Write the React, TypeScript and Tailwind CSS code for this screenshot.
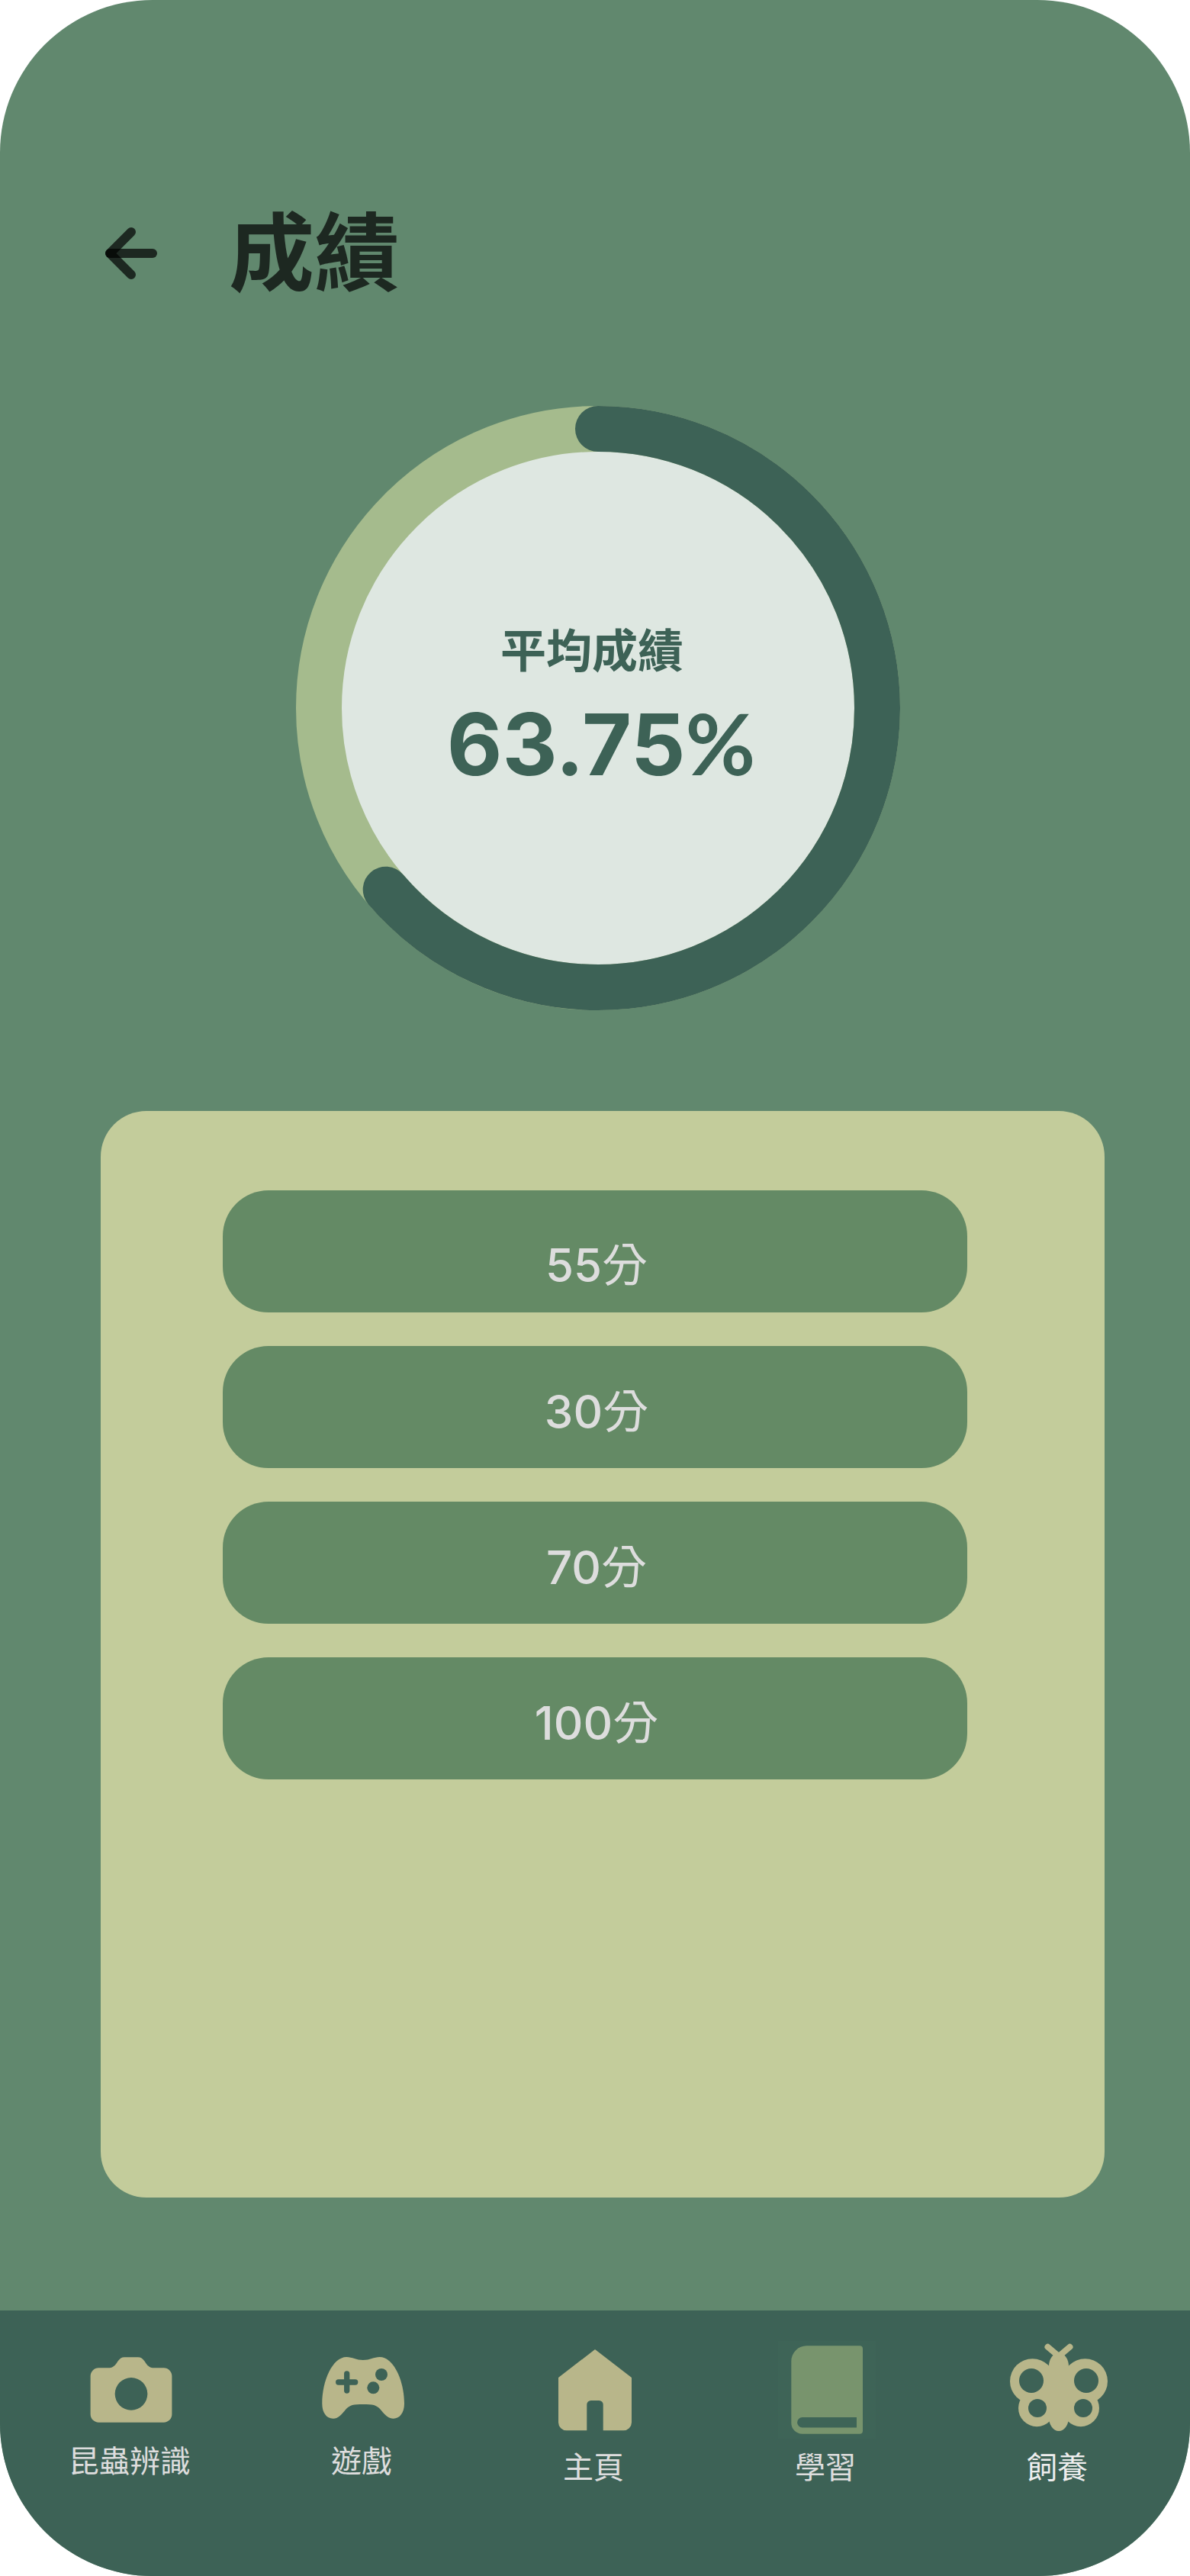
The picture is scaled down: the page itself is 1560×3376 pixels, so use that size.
import type { ReactNode } from 'react';

const FONT = "font-['Inter','Noto_Sans_CJK_TC',sans-serif]";

const AVERAGE = 63.75;

const scores = [
  { value: 55, row: 'pt-9' },
  { value: 30, row: 'pt-3' },
  { value: 70, row: 'pt-3' },
  { value: 100, row: 'pt-3' },
];

function BackIcon() {
  return (
    <svg viewBox="0 0 72 72" className="size-18" fill="none" stroke="#000" strokeWidth="12" strokeLinecap="round" strokeLinejoin="round" aria-hidden="true">
      <path d="M8 36H64" strokeOpacity="0.7" />
      <path d="M36 8L8 36L36 64" strokeOpacity="0.7" />
    </svg>
  );
}

function ProgressRing({ percent }: { percent: number }) {
  return (
    <svg viewBox="0 0 792 792" className="col-start-1 row-start-1 w-full" fill="none" aria-hidden="true">
      <circle cx="396" cy="396" r="366" fill="#DEE7E1" stroke="#A5BB8D" strokeWidth="60" />
      <circle
        cx="396"
        cy="396"
        r="366"
        stroke="#3D6256"
        strokeWidth="60"
        strokeLinecap="round"
        pathLength="100"
        strokeDasharray={`${percent} 100`}
        transform="rotate(-90 396 396)"
      />
    </svg>
  );
}

function Icon({ children }: { children: ReactNode }) {
  return (
    <svg viewBox="0 0 128 128" className="size-32" fill="#B8B68A" aria-hidden="true">
      {children}
    </svg>
  );
}

const cameraIcon = (
  <Icon>
    <path
      fillRule="evenodd"
      d="M21.3 35.3H34C39 35.3 42 33 44.5 29.5L46.5 26.5C49 23 51.5 21.3 55 21.3H73C76.5 21.3 79 23 81.5 26.5L83.5 29.5C86 33 89 35.3 94 35.3H106.7A10.7 10.7 0 0 1 117.4 46V96A10.7 10.7 0 0 1 106.7 106.7H21.3A10.7 10.7 0 0 1 10.6 96V46A10.7 10.7 0 0 1 21.3 35.3ZM64 48A21.3 21.3 0 1 0 64 90.7A21.3 21.3 0 1 0 64 48Z"
    />
  </Icon>
);

const gamepadIcon = (
  <Icon>
    <path d="M42.3 21C50 21 55 25 64 25C73 25 78 21 85.7 21C104 21 118 52 118 82C118 94 112 101.7 103.7 101.7C96 101.7 92 96 87 90C81 83.5 77 83 64 83C51 83 47 83.5 41 90C36 96 32 101.7 24.7 101.7C16 101.7 10.3 94 10.3 82C10.3 52 24 21 42.3 21Z" />
    <path d="M42.7 43V65M31.7 54H53.7" stroke="#3D6256" strokeWidth="7.3" strokeLinecap="round" />
    <circle cx="88" cy="44" r="8" fill="#3D6256" />
    <circle cx="77.3" cy="61.3" r="8" fill="#3D6256" />
  </Icon>
);

const homeIcon = (
  <Icon>
    <path d="M64 11L112 48V106.7A10.7 10.7 0 0 1 101.3 117.3H74.7V83.3A5.3 5.3 0 0 0 69.3 78H58.7A5.3 5.3 0 0 0 53.3 83.3V117.3H26.7A10.7 10.7 0 0 1 16 106.7V48Z" />
  </Icon>
);

const bookIcon = (
  <Icon>
    <rect width="128" height="128" fill="#3E6457" />
    <path
      fill="#78946D"
      fillRule="evenodd"
      d="M37.5 6.3H107A4 4 0 0 1 111 10.3V117.7A4 4 0 0 1 107 121.7H31.5A14.2 14.2 0 0 1 17.3 107.5V26.5A20.2 20.2 0 0 1 37.5 6.3ZM31.9 100A6.8 6.8 0 0 0 31.9 113.6H103V100Z"
    />
  </Icon>
);

const butterflyIcon = (
  <Icon>
    <path d="M49.5 7.8L64 20L78.5 7.8" fill="none" stroke="#B8B68A" strokeWidth="8" strokeLinecap="round" />
    <circle cx="29.5" cy="52.7" r="29.5" />
    <circle cx="98.5" cy="52.7" r="29.5" />
    <circle cx="35.2" cy="88" r="24.2" />
    <circle cx="92.8" cy="88" r="24.2" />
    <rect x="42" y="40" width="44" height="60" />
    <rect x="51" y="15.5" width="26" height="102.5" rx="13" ry="18" />
    <g fill="#3D6256">
      <circle cx="28" cy="52" r="16" />
      <circle cx="100" cy="52" r="16" />
      <circle cx="36" cy="88" r="12" />
      <circle cx="96" cy="88" r="12" />
    </g>
  </Icon>
);

const tabs = [
  { label: '昆蟲辨識', icon: cameraIcon, text: 'mt-1 text-[#DDDDDD]' },
  { label: '遊戲', icon: gamepadIcon, text: 'mt-1 text-[#DDDDDD]' },
  { label: '主頁', icon: homeIcon, text: 'mt-3 text-[#DDDDDD]' },
  { label: '學習', icon: bookIcon, text: 'mt-3 text-[#DDDDDD]', current: true },
  { label: '飼養', icon: butterflyIcon, text: 'mt-3 text-[#EEEEEE]' },
];

export default function App() {
  return (
    <div className={`flex min-h-screen flex-col overflow-hidden rounded-[200px] bg-[#61886E] ${FONT}`}>
      <header className="flex items-center gap-[92px] pt-[252px] pl-[136px]">
        <button type="button" aria-label="返回" className="shrink-0 cursor-pointer">
          <BackIcon />
        </button>
        <h1 className="text-[112px] leading-[160px] font-bold text-black/70">成績</h1>
      </header>

      <main className="flex flex-1 flex-col pt-[120px]">
        <section className="flex justify-center pl-2">
          <div className="grid w-full max-w-[792px] place-items-center">
            <ProgressRing percent={AVERAGE} />
            <div className="col-start-1 row-start-1 flex flex-col items-center gap-3 text-[#3D6256]">
              <h2 className="pr-4 text-[60px] leading-[80px] font-bold">平均成績</h2>
              <p className="pl-2 text-[112px] leading-[136px] font-bold">
                {AVERAGE}
                <span className="font-['Lato',sans-serif]">%</span>
              </p>
            </div>
          </div>
        </section>

        <section className="mt-[132px] mr-[112px] mb-[148px] ml-[132px] flex-1 rounded-[60px] bg-[#C3CC9B] pt-[104px] pr-[180px] pb-[104px] pl-[160px]">
          <ul className="flex flex-col gap-11">
            {scores.map(({ value, row }) => (
              <li
                key={value}
                className={`flex h-40 items-center justify-center rounded-[60px] bg-[#648A65] pl-1 text-[60px] leading-[72px] text-[#DDDDDD] ${row}`}
              >
                <span>
                  <span className="font-medium">{value}</span>分
                </span>
              </li>
            ))}
          </ul>
        </section>
      </main>

      <nav className="grid grid-cols-5 bg-[#3D6256] px-5 pt-10 pb-[116px]">
        {tabs.map(({ label, icon, text, current }) => (
          <a key={label} href="#" aria-current={current ? 'page' : undefined} className="flex flex-col items-center">
            {icon}
            <span className={`pr-1 text-[40px] leading-[52px] ${text}`}>{label}</span>
          </a>
        ))}
      </nav>
    </div>
  );
}
